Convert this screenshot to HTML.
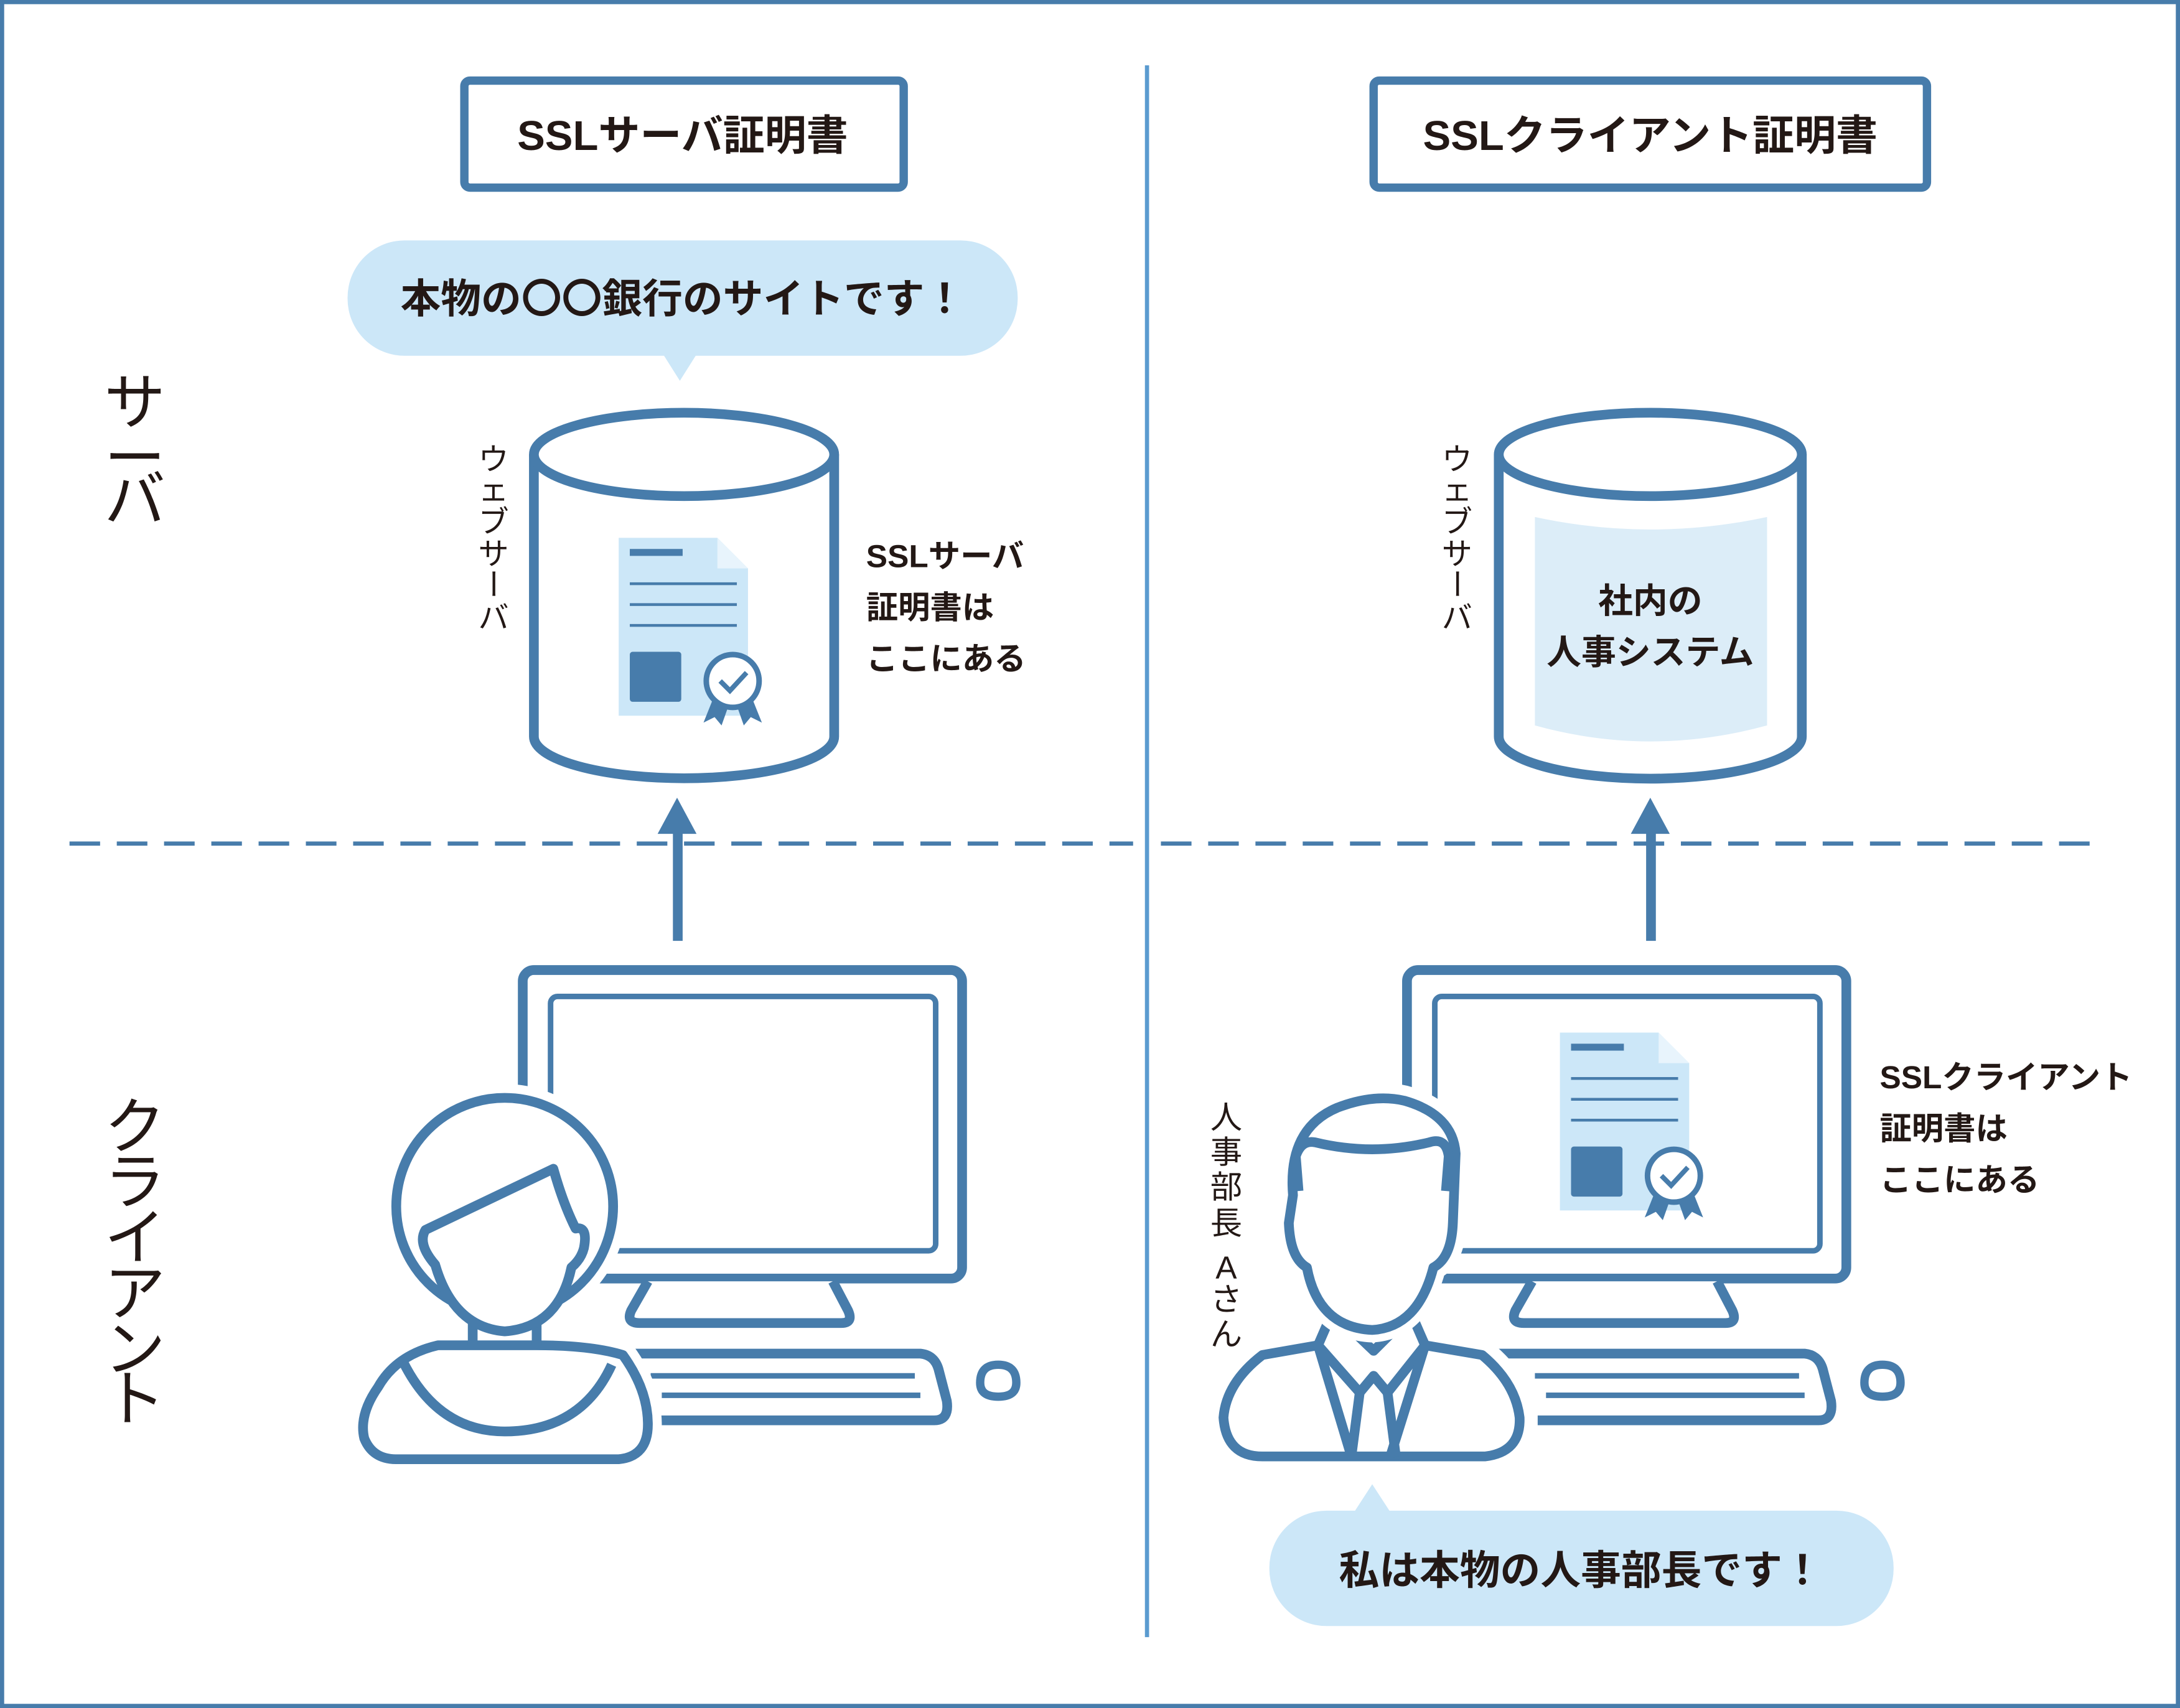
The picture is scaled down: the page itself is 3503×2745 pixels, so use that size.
<!DOCTYPE html>
<html><head><meta charset="utf-8"><style>
html,body{margin:0;padding:0;background:#fff;}
svg{display:block;}
text{font-family:"Liberation Sans","Noto Sans CJK JP",sans-serif;fill:#231815;}
</style></head><body>
<svg width="3503" height="2745" viewBox="0 0 1568 1229" preserveAspectRatio="none" xmlns="http://www.w3.org/2000/svg">
<rect x="1.5" y="1.5" width="1565" height="1226" fill="#fff" stroke="#477cab" stroke-width="3"/>
<line x1="825" y1="47" x2="825" y2="1178" stroke="#5b9bd0" stroke-width="3"/>
<line x1="50" y1="607" x2="815" y2="607" stroke="#477cab" stroke-width="3" stroke-dasharray="22,12"/>
<line x1="835" y1="607" x2="1515" y2="607" stroke="#477cab" stroke-width="3" stroke-dasharray="22,12"/>

<g fill="none" stroke="#477cab">
<rect x="334" y="58" width="316" height="77" rx="4" stroke-width="6"/>
<rect x="988" y="58" width="398" height="77" rx="4" stroke-width="6"/>
</g>
<text x="491" y="108" font-size="30" font-weight="bold" text-anchor="middle">SSLサーバ証明書</text>
<text x="1187" y="108" font-size="30" font-weight="bold" text-anchor="middle">SSLクライアント証明書</text>

<rect x="250" y="173" width="482" height="83" rx="41" fill="#cce7f8"/>
<path d="M477 255 L489 274 L501 255Z" fill="#cce7f8"/>
<text x="491" y="225" font-size="29" font-weight="bold" text-anchor="middle">本物の〇〇銀行のサイトです！</text>
<rect x="913" y="1087" width="449" height="83" rx="41" fill="#cce7f8"/>
<path d="M974 1088 L987 1068 L1000 1088Z" fill="#cce7f8"/>
<text x="1137" y="1140" font-size="29" font-weight="bold" text-anchor="middle">私は本物の人事部長です！</text>

<g font-size="44" text-anchor="middle">
<text x="97" y="305">サ</text><text x="97" y="345">ー</text><text x="97" y="375">バ</text>
<text x="97" y="826">ク</text><text x="97" y="866">ラ</text><text x="97" y="906">イ</text><text x="97" y="946">ア</text><text x="97" y="986">ン</text><text x="97" y="1022">ト</text>
</g>
<g font-size="22" text-anchor="middle">
<text x="355" y="338">ウ</text><text x="355" y="360">ェ</text><text x="355" y="383">ブ</text><text x="355" y="406">サ</text><text x="355" y="428" transform="rotate(90 355 420)">ー</text><text x="355" y="452">バ</text>
<text x="1048" y="338">ウ</text><text x="1048" y="360">ェ</text><text x="1048" y="383">ブ</text><text x="1048" y="406">サ</text><text x="1048" y="428" transform="rotate(90 1048 420)">ー</text><text x="1048" y="452">バ</text>
</g>
<g font-size="23" text-anchor="middle">
<text x="882" y="812">人</text><text x="882" y="837">事</text><text x="882" y="862">部</text><text x="882" y="888">長</text><text x="882" y="920">A</text><text x="882" y="943">さ</text><text x="882" y="968">ん</text>
</g>
<g font-size="23" font-weight="bold">
<text x="623" y="408">SSLサーバ</text><text x="623" y="445">証明書は</text><text x="623" y="482">ここにある</text>
<text x="1352" y="783">SSLクライアント</text><text x="1352" y="820">証明書は</text><text x="1352" y="857">ここにある</text>
</g>

<g fill="#fff" stroke="#477cab" stroke-width="7">
<path d="M384 327 L384 530 A108 30 0 0 0 600 530 L600 327"/>
<ellipse cx="492" cy="327" rx="108" ry="30"/>
<path d="M1078 327 L1078 530 A108 30 0 0 0 1296 530 L1296 327"/>
<ellipse cx="1187" cy="327" rx="109" ry="30"/>
</g>
<path d="M1104 372 Q1187 390 1271 372 L1271 522 Q1187 545 1104 522Z" fill="#dcedf8"/>
<text x="1187" y="441" font-size="25" font-weight="bold" text-anchor="middle">社内の</text>
<text x="1187" y="478" font-size="25" font-weight="bold" text-anchor="middle">人事システム</text>

<g id="doc">
<path d="M445 387 L516 387 L538 409 L538 515 L445 515Z" fill="#cce7f8"/>
<path d="M516 387 L516 409 L538 409Z" fill="#e8f4fc"/>
<rect x="453" y="395" width="38" height="5" fill="#477cab"/>
<g stroke="#477cab" stroke-width="2"><line x1="453" y1="420" x2="530" y2="420"/><line x1="453" y1="435" x2="530" y2="435"/><line x1="453" y1="450" x2="530" y2="450"/></g>
<rect x="453" y="469" width="37" height="36" rx="2" fill="#477cab"/>
<path d="M514 500 L506 520 L514 516 L519 522 L525 505Z M540 500 L548 520 L540 516 L535 522 L529 505Z" fill="#477cab"/>
<circle cx="527" cy="490" r="19" fill="#fff" stroke="#477cab" stroke-width="4"/>
<path d="M518 490 L525 497 L537 484" fill="none" stroke="#477cab" stroke-width="3.5"/>
</g>

<g fill="#477cab">
<rect x="484" y="598" width="7" height="79"/><path d="M473 600 L487 574 L501 600Z"/>
<rect x="1184" y="598" width="7" height="79"/><path d="M1173 600 L1187 574 L1201 600Z"/>
</g>

<g id="pc" fill="none" stroke="#477cab">
<rect x="376" y="698" width="316" height="222" rx="8" stroke-width="7" fill="#fff"/>
<rect x="396" y="717" width="277" height="183" rx="5" stroke-width="4"/>
<path d="M466 922 L454 943 Q450 952 460 952 L605 952 Q614 952 610 943 L599 922" stroke-width="7" fill="#fff"/>
<path d="M440 974 L662 974 Q672 975 675 985 L681 1008 Q683 1022 672 1022 L470 1022" stroke-width="7"/>
<line x1="468" y1="990" x2="658" y2="990" stroke-width="4"/>
<line x1="476" y1="1004" x2="662" y2="1004" stroke-width="4"/>
<path d="M705 995 Q705 982 718 982 Q731 982 731 995 Q731 1005 718 1005 Q705 1005 705 995Z" stroke-width="6"/>
</g>
<use href="#pc" x="636" y="0"/>
<use href="#doc" x="677" y="356"/>

<g stroke-linejoin="round">
<g fill="#fff" stroke="#fff" stroke-width="20">
<circle cx="363" cy="868" r="78"/>
<path d="M340 968 L315 968 Q285 975 272 998 Q258 1018 262 1035 Q268 1050 285 1050 L445 1050 Q466 1048 466 1025 Q466 1000 448 975 Q425 968 386 968Z"/>
</g>
<circle cx="363" cy="868" r="78" fill="#fff" stroke="#477cab" stroke-width="7"/>
<path d="M340 968 L315 968 Q285 975 272 998 Q258 1018 262 1035 Q268 1050 285 1050 L445 1050 Q466 1048 466 1025 Q466 1000 448 975 Q425 968 386 968Z" fill="#fff" stroke="#477cab" stroke-width="7"/>
<path d="M340 930 L340 968 M386 930 L386 968" stroke="#477cab" stroke-width="7"/>
<path d="M290 980 Q315 1030 363 1030 Q418 1030 440 982" fill="none" stroke="#477cab" stroke-width="7"/>
<path d="M306 885 L398 841 Q405 866 414 884 Q423 882 420 898 Q418 906 411 912 Q402 955 363 958 Q326 955 313 910 Q300 895 306 885Z" fill="#fff" stroke="#477cab" stroke-width="7"/>
</g>

<g stroke-linejoin="round" stroke="#477cab" stroke-width="7">
<path d="M948 968 L905 975 Q880 995 878 1020 Q880 1048 905 1048 L1072 1048 Q1097 1045 1095 1020 Q1092 995 1068 975 L1025 968 L1015 945 L958 945Z" fill="#fff" stroke="#fff" stroke-width="20"/>
<path d="M948 968 L908 975 Q882 995 880 1020 Q882 1048 908 1048 L1068 1048 Q1094 1045 1093 1020 Q1090 995 1066 975 L1025 968" fill="#fff"/>
<path d="M958 945 L948 968 L978 1002 L988 990 L998 1002 L1025 968 L1015 945" fill="none"/>
<path d="M948 968 L972 1048 M1025 968 L1000 1048 M978 1002 L972 1048 M998 1002 L1004 1048 M965 950 L988 972 L1010 950" fill="none"/>
<path d="M930 860 Q926 810 960 795 Q988 785 1010 790 Q1045 800 1048 828 L1046 880 Q1045 905 1031 912 Q1020 955 987 957 Q948 955 940 912 Q928 905 926 880Z" fill="#fff" stroke="#fff" stroke-width="18"/>
<path d="M930 860 Q926 812 962 797 Q988 787 1010 792 Q1045 802 1047 830 L1045 880 Q1044 905 1031 912 Q1020 955 987 957 Q948 955 940 912 Q928 905 927 880Z" fill="#fff"/>
<path d="M934 857 L932 832 Q936 820 946 822 Q987 832 1028 822 Q1040 818 1042 832 L1040 857" fill="none"/>
</g>
</svg>
</body></html>
